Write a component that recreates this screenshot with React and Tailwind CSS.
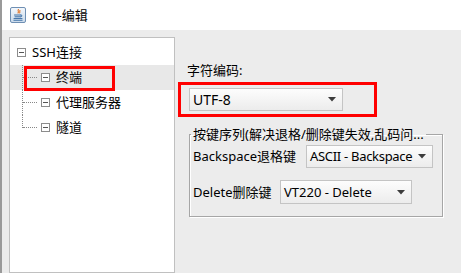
import React from 'react';

const font = { fontFamily: '"Noto Sans", "Noto Sans CJK SC", sans-serif' };

function JavaIcon() {
  return (
    <svg width="16" height="16" viewBox="0 0 16 16" className="shrink-0">
      <defs>
        <linearGradient id="jbg" x1="0" y1="0" x2="0" y2="1">
          <stop offset="0" stopColor="#f4f8fc" />
          <stop offset="1" stopColor="#c9d9ea" />
        </linearGradient>
      </defs>
      <rect x="0.5" y="0.5" width="15" height="15" rx="1.5" fill="url(#jbg)" stroke="#6f8fb3" />
      <path d="M8.5 2.5c-1.5 1.2 1 2-0.5 3.5M10 3.5c-1 0.8 0.6 1.3-0.4 2.3" stroke="#e2762a" strokeWidth="1.1" fill="none" strokeLinecap="round" />
      <path d="M4.5 8h6.5M5 9.8h5.5M4 11.6h8M11 8c1.4 0 1.4 1.8 0 1.8" stroke="#3b6ea5" strokeWidth="1" fill="none" strokeLinecap="round" />
      <path d="M3.5 13.3h9" stroke="#3b6ea5" strokeWidth="0.9" />
    </svg>
  );
}

function Arrow() {
  return (
    <svg width="8" height="5" viewBox="0 0 8 5" className="shrink-0">
      <path d="M0 0h8L4 4.5z" fill="#3c3c3c" />
    </svg>
  );
}

function Combo({ value, className }) {
  return (
    <div className={`flex items-center justify-between border border-[#c4c4c4] bg-gradient-to-b from-[#fdfdfd] to-[#ececec] pl-[3px] pr-[6px] text-black ${className}`}>
      <span className="whitespace-nowrap leading-none">{value}</span>
      <Arrow />
    </div>
  );
}

function Expander() {
  return (
    <span className="flex h-[9px] w-[9px] items-center justify-center border border-[#8c8c8c] bg-white">
      <span className="h-px w-[5px] bg-[#555]" />
    </span>
  );
}

function ChildRow({ label, selected, last }) {
  return (
    <div className={`relative flex h-[25px] items-center ${selected ? 'bg-[#e8e8e8]' : ''}`}>
      <div className={`ml-[12px] w-[1px] self-stretch ${last ? 'h-[13px] self-start' : ''} border-l border-dotted border-[#888]`} />
      <div className="w-[14px] border-t border-dotted border-[#888]" />
      <span className="ml-[4px]"><Expander /></span>
      <span className="ml-[6px] text-[13px] leading-none">{label}</span>
    </div>
  );
}

export default function App() {
  return (
    <div className="relative flex h-[273px] w-[461px] flex-col overflow-hidden border-l-2 border-[#9a9a9a] bg-[#ececec] text-black" style={font}>
      {/* title bar */}
      <div className="flex h-[30px] shrink-0 items-center gap-[6px] bg-white pl-[8px]">
        <JavaIcon />
        <span className="text-[13px] leading-none">root-编辑</span>
      </div>

      <div className="flex flex-1 pl-[7px] pt-[7px]">
        {/* tree */}
        <div className="flex w-[166px] shrink-0 flex-col border border-[#c0c0c0] bg-white pt-[2px]">
          <div className="flex h-[25px] items-center pl-[7px]">
            <Expander />
            <span className="ml-[6px] text-[13px] leading-none">SSH连接</span>
          </div>
          <ChildRow label="终端" selected />
          <ChildRow label="代理服务器" />
          <ChildRow label="隧道" last />
        </div>

        {/* settings */}
        <div className="flex flex-1 flex-col pl-[12px] pt-[27px]">
          <div className="text-[13px] leading-none">字符编码:</div>
          <Combo value="UTF-8" className="ml-[2px] mt-[11px] h-[23px] w-[154px] text-[14px]" />

          <fieldset className="ml-[2px] mt-[16px] h-[90px] w-[254px] border border-[#a6a6a6] pl-[1px] shadow-[1px_1px_0_#fff,inset_1px_1px_0_#fff]">
            <legend className="px-[2px] text-[13px] leading-[14px]">按键序列(解决退格/删除键失效,乱码问...</legend>
            <div className="flex items-center pl-[2px] pt-[4px]">
              <span className="w-[113px] text-[13px] leading-none">Backspace退格键</span>
              <Combo value="ASCII - Backspace" className="h-[23px] w-[127px] text-[13px] tracking-[-0.3px]" />
            </div>
            <div className="flex items-center pl-[2px] pt-[12px]">
              <span className="w-[87px] text-[13px] leading-none">Delete删除键</span>
              <Combo value="VT220 - Delete" className="h-[24px] w-[132px] text-[13px]" />
            </div>
          </fieldset>
        </div>
      </div>

      {/* red annotation boxes */}
      <div className="pointer-events-none absolute left-[22px] top-[66px] h-[25px] w-[91px] border-[3px] border-[#ff0000]" />
      <div className="pointer-events-none absolute left-[176px] top-[82px] h-[35px] w-[199px] border-[3px] border-[#ff0000]" />
    </div>
  );
}
